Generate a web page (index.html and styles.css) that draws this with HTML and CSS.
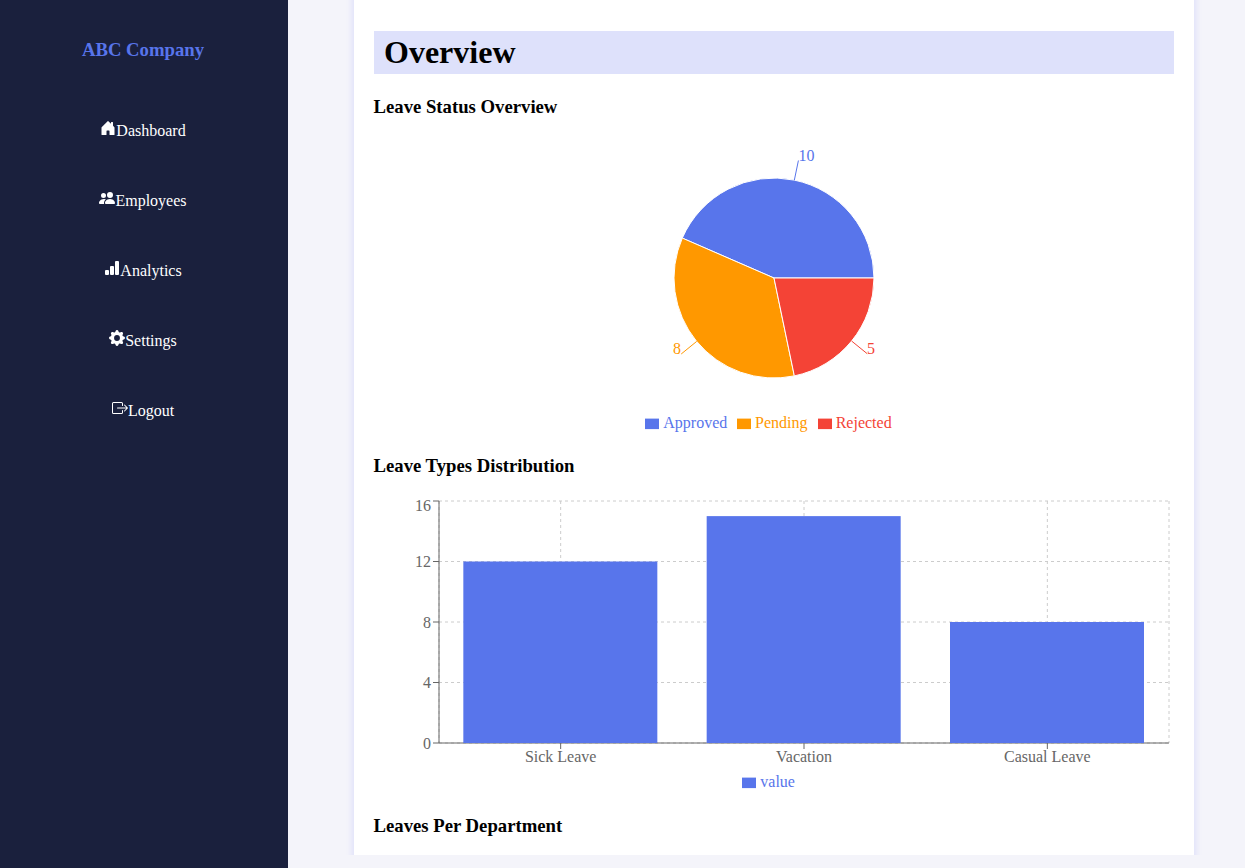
FILE: index.html
```html
<!DOCTYPE html>
<html lang="en">
<head>
<meta charset="utf-8">
<title>ABC Company</title>
<link rel="stylesheet" href="styles.css">
</head>
<body>
<div class="app">
  <nav class="sidebar">
    <h3 class="brand">ABC Company</h3>
    <ul class="menu">
      <li><svg class="icon" viewBox="0 0 16 16"><path d="M6.5 14.5v-3.505c0-.245.25-.495.5-.495h2c.25 0 .5.25.5.5v3.5a.5.5 0 0 0 .5.5h4a.5.5 0 0 0 .5-.5v-7a.5.5 0 0 0-.146-.354L13 5.793V2.5a.5.5 0 0 0-.5-.5h-1a.5.5 0 0 0-.5.5v1.293L8.354 1.146a.5.5 0 0 0-.708 0l-6 6A.5.5 0 0 0 1.500 7.500v7a.5.5 0 0 0 .5.5h4a.5.5 0 0 0 .5-.5"/></svg><span>Dashboard</span></li>
      <li><svg class="icon" viewBox="0 0 16 16"><path d="M7 14s-1 0-1-1 1-4 5-4 5 3 5 4-1 1-1 1zm4-6a3 3 0 1 0 0-6 3 3 0 0 0 0 6m-5.784 6A2.240 2.240 0 0 1 5 13c0-1.355.68-2.750 1.936-3.720A6.300 6.300 0 0 0 5 9c-4 0-5 3-5 4s1 1 1 1zM4.500 8a2.500 2.500 0 1 0 0-5 2.500 2.500 0 0 0 0 5"/></svg><span>Employees</span></li>
      <li><svg class="icon" viewBox="0 0 16 16"><path d="M1 11a1 1 0 0 1 1-1h2a1 1 0 0 1 1 1v3a1 1 0 0 1-1 1H2a1 1 0 0 1-1-1zm5-4a1 1 0 0 1 1-1h2a1 1 0 0 1 1 1v7a1 1 0 0 1-1 1H7a1 1 0 0 1-1-1zm5-5a1 1 0 0 1 1-1h2a1 1 0 0 1 1 1v12a1 1 0 0 1-1 1h-2a1 1 0 0 1-1-1z"/></svg><span>Analytics</span></li>
      <li><svg class="icon" viewBox="0 0 16 16"><path d="M9.405 1.050c-.413-1.400-2.397-1.400-2.810 0l-.1.340a1.464 1.464 0 0 1-2.105.872l-.310-.170c-1.283-.698-2.686.705-1.987 1.987l.169.311c.446.820.023 1.841-.872 2.105l-.340.100c-1.400.413-1.400 2.397 0 2.810l.340.100a1.464 1.464 0 0 1 .872 2.105l-.170.310c-.698 1.283.705 2.686 1.987 1.987l.311-.169a1.464 1.464 0 0 1 2.105.872l.100.340c.413 1.400 2.397 1.400 2.810 0l.100-.340a1.464 1.464 0 0 1 2.105-.872l.310.170c1.283.698 2.686-.705 1.987-1.987l-.169-.311a1.464 1.464 0 0 1 .872-2.105l.340-.100c1.400-.413 1.400-2.397 0-2.810l-.340-.100a1.464 1.464 0 0 1-.872-2.105l.170-.310c.698-1.283-.705-2.686-1.987-1.987l-.311.169a1.464 1.464 0 0 1-2.105-.872zM8 10.930a2.929 2.929 0 1 1 0-5.860 2.929 2.929 0 0 1 0 5.858z"/></svg><span>Settings</span></li>
      <li><svg class="icon" viewBox="0 0 16 16"><path fill-rule="evenodd" d="M10 12.500a.5.5 0 0 1-.5.5h-8a.5.5 0 0 1-.5-.5v-9a.5.5 0 0 1 .5-.5h8a.5.5 0 0 1 .5.5v2a.5.5 0 0 0 1 0v-2A1.500 1.500 0 0 0 9.500 2h-8A1.500 1.500 0 0 0 0 3.500v9A1.500 1.500 0 0 0 1.500 14h8a1.500 1.500 0 0 0 1.500-1.500v-2a.5.5 0 0 0-1 0z"/><path fill-rule="evenodd" d="M15.854 8.354a.5.5 0 0 0 0-.708l-3-3a.5.5 0 0 0-.708.708L14.293 7.500H5.500a.5.5 0 0 0 0 1h8.793l-2.147 2.146a.5.5 0 0 0 .708.708z"/></svg><span>Logout</span></li>
    </ul>
  </nav>
  <main class="content">
    <section class="panel">
      <h1 class="title">Overview</h1>
      <h3 class="heading">Leave Status Overview</h3>
      <svg class="chart" viewBox="374 136 800 300">
        <g class="slices">
          <path class="approved" d="M774 278L874 278A100 100 0 0 0 682.310 238.090Z"/>
          <path class="pending" d="M774 278L682.310 238.090A100 100 0 0 0 794.350 375.910Z"/>
          <path class="rejected" d="M774 278L794.350 375.910A100 100 0 0 0 874 278Z"/>
        </g>
        <g class="leaders">
          <path class="approved-line" d="M794.350 180.090L798.420 160.510"/>
          <path class="pending-line" d="M696.700 341.400L681.200 354"/>
          <path class="rejected-line" d="M851.700 341.100L867.200 353.700"/>
        </g>
        <text class="approved" x="798.400" y="161">10</text>
        <text class="pending" x="681" y="354" text-anchor="end">8</text>
        <text class="rejected" x="867" y="354">5</text>
        <rect class="approved" x="645" y="418.600" width="14" height="10.500"/>
        <text class="approved" x="663.300" y="428">Approved</text>
        <rect class="pending" x="737" y="418.600" width="14" height="10.500"/>
        <text class="pending" x="755" y="428">Pending</text>
        <rect class="rejected" x="818" y="418.600" width="14" height="10.500"/>
        <text class="rejected" x="835.700" y="428">Rejected</text>
      </svg>
      <h3 class="heading">Leave Types Distribution</h3>
      <svg class="chart" viewBox="374 496 800 300">
        <g class="grid">
          <path d="M439 743H1169"/><path d="M439 682.500H1169"/><path d="M439 622H1169"/><path d="M439 561.500H1169"/><path d="M439 501H1169"/>
          <path d="M560.670 501V743"/><path d="M804 501V743"/><path d="M1047.330 501V743"/><path d="M439 501V743"/><path d="M1169 501V743"/>
        </g>
        <path class="axis" d="M439 743H1169M560.670 749V743M804 749V743M1047.330 749V743"/>
        <path class="axis" d="M439 501V743M433 743H439M433 682.500H439M433 622H439M433 561.500H439M433 501H439"/>
        <g class="approved">
          <rect x="463.330" y="561.500" width="194" height="181.500"/>
          <rect x="706.670" y="516.120" width="194" height="226.880"/>
          <rect x="950" y="622" width="194" height="121"/>
        </g>
        <g class="labels" text-anchor="end">
          <text x="431" y="748.500">0</text><text x="431" y="688">4</text><text x="431" y="627.500">8</text><text x="431" y="567">12</text><text x="431" y="511">16</text>
        </g>
        <g class="labels" text-anchor="middle">
          <text x="560.670" y="762">Sick Leave</text><text x="804" y="762">Vacation</text><text x="1047.330" y="762">Casual Leave</text>
        </g>
        <rect class="approved" x="742" y="777.600" width="14" height="10.500"/>
        <text class="approved" x="760.300" y="787">value</text>
      </svg>
      <h3 class="heading">Leaves Per Department</h3>
    </section>
  </main>
</div>
</body>
</html>
```
FILE: styles.css
```css
* { box-sizing: border-box; }
body {
  margin: 0;
  background: #f4f4fa;
  color: #000;
  font: 16px "Liberation Serif", "Times New Roman", serif;
}
.app { display: flex; height: 868px; overflow: hidden; }
.sidebar {
  width: 288px;
  flex: none;
  padding: 39px 2px 0 0;
  background: #1a203d;
  color: #fff;
  text-align: center;
}
.brand { margin: 0; font-size: 18.72px; line-height: 22px; color: #5875eb; }
.menu {
  display: flex;
  flex-direction: column;
  gap: 52px;
  list-style: none;
  margin: 59px 0 0;
  padding: 0;
}
.menu li { height: 18px; line-height: 18px; white-space: nowrap; }
.icon { width: 16px; height: 16px; fill: currentColor; }
.content { flex: 1; height: 855px; padding: 0 51px 0 66px; overflow: hidden; }
.panel {
  height: 960px;
  margin-top: -30px;
  padding: 61px 20px 0;
  background: #fff;
  box-shadow: 0 0 8px rgba(88, 100, 255, 0.2);
}
.title {
  height: 43px;
  margin: 0 0 22px;
  padding: 3px 10px;
  background: #dee1fb;
  font-size: 32px;
  line-height: 37px;
}
.heading { margin: 0 0 18px -0.5px; font-size: 18.72px; line-height: 22px; }
.chart { display: block; width: 800px; height: 300px; }
.chart + .heading { margin: 19px 0 19px -0.5px; }
.slices { stroke: #fff; stroke-width: 1; }
.leaders { fill: none; stroke-width: 1; }
.approved { fill: #5875eb; }
.pending { fill: #ff9800; }
.rejected { fill: #f44336; }
.approved-line { stroke: #5875eb; }
.pending-line { stroke: #ff9800; }
.rejected-line { stroke: #f44336; }
.grid { fill: none; stroke: #ccc; stroke-dasharray: 3 3; }
.axis { fill: none; stroke: #666; }
.labels { fill: #666; }
```
